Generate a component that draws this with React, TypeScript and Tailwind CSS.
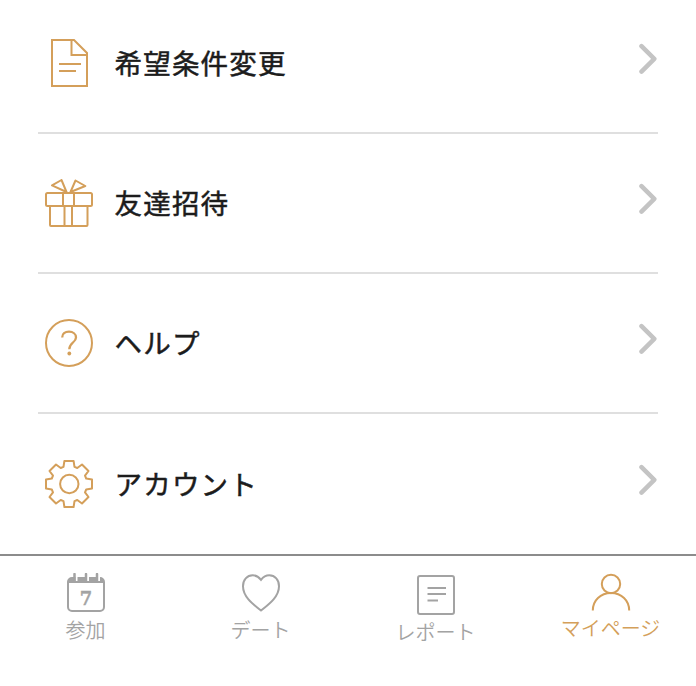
import type { ReactNode } from "react";

const gold = "#d49f5a";
const grey = "#a3a3a3";

function DocumentIcon() {
  return (
    <svg width="48" height="48" viewBox="0 0 48 48" fill="none" stroke={gold} strokeWidth="2">
      <path d="M7 1H29L42 14V47H7ZM26.5 1V16H42M14 25H36M14 32H31" />
    </svg>
  );
}

function GiftIcon() {
  return (
    <svg width="48" height="48" viewBox="0 0 48 48" fill="none" stroke={gold} strokeWidth="2" strokeLinejoin="round">
      <rect x="1" y="14" width="46" height="13" rx="1.5" />
      <path d="M5 27V46Q5 47 6 47H41.500Q42.500 47 42.500 46V27M18 14V27M29 14V27M19.500 27V47M27 27V47" />
      <path d="M21.500 13L7 6.300L16.500 1ZM25.500 13L30.500 1.500L40.300 7Z" />
    </svg>
  );
}

function HelpIcon() {
  return (
    <svg width="48" height="48" viewBox="0 0 48 48" fill="none" stroke={gold} strokeWidth="2">
      <circle cx="24" cy="24" r="23" />
      <path d="M17.200 18.500C17.200 14.800 20 12.700 24 12.700C28 12.700 31 15 31 18.400C31 23.500 24.300 23.700 24.300 30.200" strokeWidth="2.300" />
      <circle cx="24.300" cy="34.500" r="1.900" fill={gold} stroke="none" />
    </svg>
  );
}

function GearIcon() {
  return (
    <svg width="48" height="48" viewBox="-24 -24 48 48" fill="none" stroke={gold} strokeWidth="2" strokeLinejoin="round">
      <path d="M-5.500 -17.200L-4.600 -23H4.600L5.500 -17.200L8.300 -16L13 -19.500L19.500 -13L16 -8.300L17.200 -5.500L23 -4.600V4.600L17.200 5.500L16 8.300L19.500 13L13 19.500L8.300 16L5.500 17.200L4.600 23H-4.600L-5.500 17.200L-8.300 16L-13 19.500L-19.500 13L-16 8.300L-17.200 5.500L-23 4.600V-4.600L-17.200 -5.500L-16 -8.300L-19.500 -13L-13 -19.500L-8.300 -16Z" />
      <circle cx="0.300" r="9.200" />
    </svg>
  );
}

function Chevron() {
  return (
    <svg className="mb-2 ml-auto" width="19" height="32" viewBox="0 0 19 32" fill="none" stroke="#c4c4c4" strokeWidth="4.500" strokeLinecap="round" strokeLinejoin="round">
      <path d="M2.500 3.200L15.300 15.800L2.500 28.600" />
    </svg>
  );
}

function Row({ icon, label, last }: { icon: ReactNode; label: string; last?: boolean }) {
  return (
    <li className={`flex h-[140px] items-center pl-[7px] ${last ? "" : "border-b-2 border-[#dfdfdf]"}`}>
      {icon}
      <span className="mb-[2px] ml-[21.500px] text-[27.500px] leading-10 font-normal tracking-[1.200px] text-[#1c1c1c] [-webkit-text-stroke:0.500px_#1c1c1c]">
        {label}
      </span>
      <Chevron />
    </li>
  );
}

function CalendarIcon() {
  return (
    <svg width="40" height="40" viewBox="0 0 40 40" fill="none" stroke={grey} strokeWidth="2">
      <rect x="2" y="5" width="36" height="33" rx="4" />
      <path d="M2 10V8Q2 5 6 5H34Q38 5 38 8V10Z" fill={grey} stroke="none" />
      <path d="M10.500 3V8M22 3V8M33 3V8" stroke="#fff" strokeWidth="2" />
      <path d="M8.500 1V8M20 1V8M31 1V8" strokeWidth="2.500" strokeLinecap="round" />
      <text
        x="13.800"
        y="32"
        textLength="12.500"
        lengthAdjust="spacingAndGlyphs"
        fill={grey}
        stroke={grey}
        strokeWidth="0.400"
        className="font-['DejaVu_Serif',serif] text-[19px] font-bold"
      >
        7
      </text>
    </svg>
  );
}

function HeartIcon() {
  return (
    <svg width="40" height="40" viewBox="0 0 40 40" fill="none" stroke={grey} strokeWidth="2">
      <path d="M20 6.800C17.500 3.600 14.800 2.300 11.800 2.300C6 2.300 2 6.800 2 13.200C2 24 12.500 31.500 20 37.500C27.500 31.500 38 24 38 13.200C38 6.800 34 2.300 28.200 2.300C25.200 2.300 22.500 3.600 20 6.800Z" />
    </svg>
  );
}

function ReportIcon() {
  return (
    <svg width="40" height="42" viewBox="0 0 40 42" fill="none" stroke={grey} strokeWidth="2">
      <rect x="2" y="3" width="36" height="38" rx="2" />
      <path d="M11.500 15H30M11.500 21H30M11.500 27.500H22" />
    </svg>
  );
}

function PersonIcon() {
  return (
    <svg width="40" height="40" viewBox="0 0 40 40" fill="none" stroke={gold} strokeWidth="2">
      <circle cx="20" cy="11" r="9.200" />
      <path d="M1.800 37.500C1.800 27.500 9.500 20 20 20S38.200 27.500 38.200 37.500" />
    </svg>
  );
}

function Tab({ icon, label, labelClass }: { icon: ReactNode; label: string; labelClass: string }) {
  return (
    <a className="flex w-[175px] shrink-0 flex-col items-center">
      {icon}
      <span className={`text-[20px] leading-6 font-[350] whitespace-nowrap ${labelClass}`}>{label}</span>
    </a>
  );
}

export default function App() {
  return (
    <div className="flex h-[686px] w-[696px] flex-col overflow-hidden bg-white font-['Noto_Sans_CJK_JP',sans-serif]">
      <ul className="-mt-1.5 mr-[38px] ml-[38px] shrink-0">
        <Row icon={<DocumentIcon />} label="希望条件変更" />
        <Row icon={<GiftIcon />} label="友達招待" />
        <Row icon={<HelpIcon />} label="ヘルプ" />
        <Row icon={<GearIcon />} label="アカウント" last />
      </ul>
      <nav className="flex grow border-t-2 border-[#8c8c8c] pt-[17px]">
        <div className="-ml-[2px] flex">
          <Tab icon={<CalendarIcon />} label="参加" labelClass="mt-[5px] text-[#a3a3a3]" />
          <Tab icon={<HeartIcon />} label="デート" labelClass="mt-[5px] text-[#a3a3a3]" />
          <Tab icon={<ReportIcon />} label="レポート" labelClass="mt-[5px] text-[#a3a3a3]" />
          <Tab icon={<PersonIcon />} label="マイページ" labelClass="mt-[3px] text-[#d49f5a]" />
        </div>
      </nav>
    </div>
  );
}
